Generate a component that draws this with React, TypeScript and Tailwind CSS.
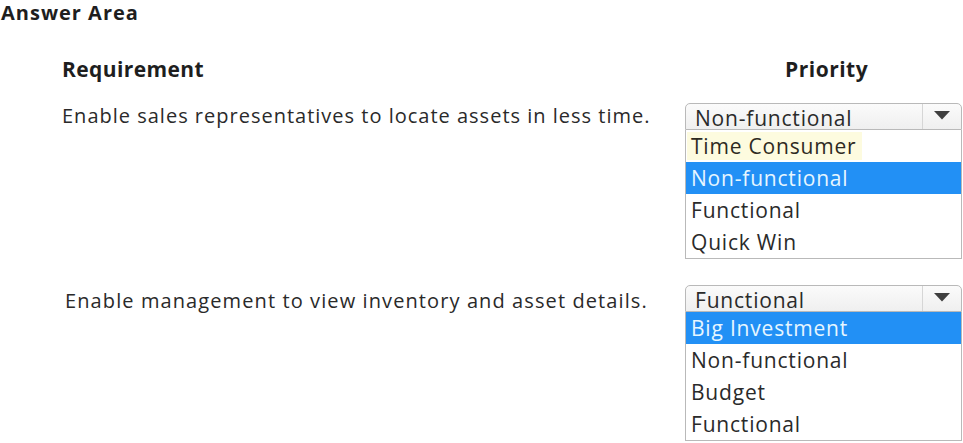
import React from "react";

type DDProps = { value: string; items: string[]; selected: number; hover?: number };

function Dropdown({ value, items, selected, hover }: DDProps) {
  return (
    <div className="w-[277px]">
      <div className="h-[27px] border border-[#b9b9b9] rounded-t-[5px] bg-gradient-to-b from-[#fbfbfb] to-[#efefef] flex overflow-hidden">
        <div className="flex-1 pl-[9px] pt-[1px] text-[21px] leading-[26px] tracking-[0.8px] text-[#2a2a2a] overflow-hidden whitespace-nowrap">
          {value}
        </div>
        <div className="w-[39px] border-l border-[#d6d6d6] flex justify-center pt-[7px]">
          <svg width="16" height="9" viewBox="0 0 16 9">
            <path d="M0 0 H16 L8 8.5 Z" fill="#3f3f3f" />
          </svg>
        </div>
      </div>
      <div className="border border-t-0 border-[#b9b9b9] bg-white">
        {items.map((it, i) => (
          <div
            key={i}
            className={
              "h-[32px] pl-[5px] text-[21px] leading-[32px] tracking-[0.8px] whitespace-nowrap " +
              (i === selected
                ? "bg-[#2290f5] text-[#e6f6ff]"
                : i === hover
                ? "text-[#2e2a22]"
                : "text-[#2a2a2a]")
            }
          >
            {i === hover ? (
              <span className="inline-block bg-[#fdfbdf] pr-[6px] -ml-[4px] pl-[4px] leading-[28px]">{it}</span>
            ) : (
              it
            )}
          </div>
        ))}
      </div>
    </div>
  );
}

export default function App() {
  return (
    <div className="w-[963px] h-[443px] bg-white overflow-hidden font-['Open_Sans',sans-serif] text-[#2a2a2a]">
      <div className="pl-[1px] pt-[1px] text-[20px] leading-[24px] font-bold tracking-[1px] text-[#1e1e1e]">Answer Area</div>
      <div className="grid grid-cols-[623px_277px] pl-[62px] mt-[31px]">
        <div className="text-[21px] leading-[26px] font-bold tracking-[0.4px] text-[#1e1e1e]">Requirement</div>
        <div className="text-[21px] leading-[26px] font-bold tracking-[0.5px] text-[#1e1e1e] pl-[100px]">Priority</div>

        <div className="pt-[21px] text-[20px] leading-[26px] tracking-[1px]">
          Enable sales representatives to locate assets in less time.
        </div>
        <div className="pt-[21px]">
          <Dropdown
            value="Non-functional"
            items={["Time Consumer", "Non-functional", "Functional", "Quick Win"]}
            selected={1}
            hover={0}
          />
        </div>

        <div className="pt-[29px] pl-[3px] text-[20px] leading-[26px] tracking-[1.1px]">
          Enable management to view inventory and asset details.
        </div>
        <div className="pt-[26px]">
          <Dropdown
            value="Functional"
            items={["Big Investment", "Non-functional", "Budget", "Functional"]}
            selected={0}
          />
        </div>
      </div>
    </div>
  );
}
